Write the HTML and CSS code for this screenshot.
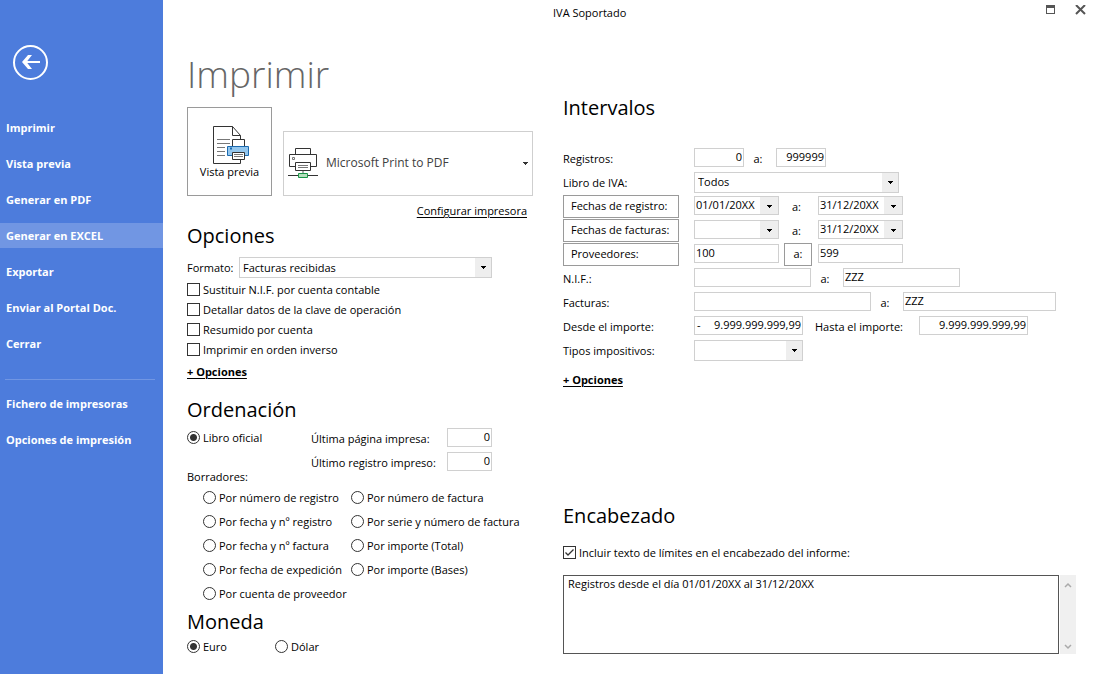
FILE: index.html
```html
<!DOCTYPE html>
<html lang="es">
<head>
<meta charset="utf-8">
<meta name="viewport" content="width=device-width, initial-scale=1">
<title>IVA Soportado</title>
<link rel="stylesheet" href="styles.css">
</head>
<body>
<div class="app">
  <nav class="sidebar">
    <button class="back" type="button" aria-label="Volver">
      <svg width="35" height="35" viewBox="0 0 35 35" fill="none" stroke="#fff" aria-hidden="true">
        <circle cx="17.5" cy="17.5" r="16.5" stroke-width="2"/>
        <path d="M10 17H27" stroke-width="2"/>
        <path d="M9 17L15 10H19L13.500 17L19 24H15Z" fill="#fff" stroke="none"/>
      </svg>
    </button>
    <a class="nav-item" href="#">Imprimir</a>
    <a class="nav-item" href="#">Vista previa</a>
    <a class="nav-item" href="#">Generar en PDF</a>
    <a class="nav-item active" href="#">Generar en EXCEL</a>
    <a class="nav-item" href="#">Exportar</a>
    <a class="nav-item" href="#">Enviar al Portal Doc.</a>
    <a class="nav-item" href="#">Cerrar</a>
    <hr class="nav-rule">
    <a class="nav-item" href="#">Fichero de impresoras</a>
    <a class="nav-item" href="#">Opciones de impresión</a>
  </nav>

  <div class="main">
    <header class="titlebar">
      <span class="title">IVA Soportado</span>
      <button class="win" type="button" aria-label="Maximizar">
        <svg width="11" height="11" viewBox="0 0 11 11" aria-hidden="true"><path d="M1 0H10V9H1ZM2 3V8H9V3Z" fill="#555" fill-rule="evenodd"/></svg>
      </button>
      <button class="win" type="button" aria-label="Cerrar">
        <svg width="11" height="11" viewBox="0 0 11 11" aria-hidden="true"><path d="M1 0L10 9M10 0L1 9" stroke="#555" stroke-width="2"/></svg>
      </button>
    </header>

    <div class="columns">
      <section class="left">
        <h1>Imprimir</h1>
        <div class="print-row">
          <button class="preview" type="button">
            <svg width="37" height="39" viewBox="0 0 37 39" fill="none" stroke="#333" aria-hidden="true">
              <path d="M.5 .5H19.500L27.500 9.500V13M.5 .5V37.500H27.500V34M19.500 .5V9.500H27.500" fill="#fff"/>
              <path d="M4 13.500H17M4 17.500H17M4 21.500H12M4 25.500H12M4 29.500H12" stroke="#777"/>
              <path d="M19.500 20V13.500H31.500V20" fill="#fff"/>
              <path d="M14.500 20.500H35.500V29.500H14.500Z" fill="#93c6ed" stroke="#1b6ab0"/>
              <path d="M17 22.500H19" stroke="#1b6ab0" stroke-width="2"/>
              <path d="M19.500 26.500H31.500V33.500H19.500Z" fill="#fff"/>
              <path d="M21 28.500H30M21 30.500H30" stroke="#777"/>
            </svg>
            <span>Vista previa</span>
          </button>
          <button class="printer" type="button">
            <svg width="30" height="31" viewBox="0 0 30 31" fill="none" stroke="#333" aria-hidden="true">
              <path d="M7.500 7V.5H22.500V7"/>
              <path d="M7 18.500H1.500V6.500H28.500V18.500H23"/>
              <path d="M7.500 14.500H22.500V22.500H7.500Z" fill="#fff"/>
              <path d="M10 17.500H20M10 19.500H20" stroke="#777"/>
              <path d="M4.500 9.500H6.500V11.500H4.500Z" stroke="#777"/>
              <path d="M15 23V26" stroke="#aaa" stroke-width="2"/>
              <path d="M0 27.500H30"/>
              <path d="M10.500 25.500H19.500V29.500H10.500Z" fill="#b5dfbd" stroke="#1a9447"/>
            </svg>
            <span class="printer-name">Microsoft Print to PDF</span>
            <svg width="5" height="3" viewBox="0 0 5 3" aria-hidden="true"><path d="M0 0H5V1H4V2H3V3H2V2H1V1H0Z" fill="#333"/></svg>
          </button>
        </div>
        <a class="config" href="#">Configurar impresora</a>

        <h2>Opciones</h2>
        <div class="format">
          <label for="fmt">Formato:</label>
          <select id="fmt" class="combo"><option>Facturas recibidas</option></select>
        </div>
        <div class="checks">
          <label class="opt"><input type="checkbox">Sustituir N.I.F. por cuenta contable</label>
          <label class="opt"><input type="checkbox">Detallar datos de la clave de operación</label>
          <label class="opt"><input type="checkbox">Resumido por cuenta</label>
          <label class="opt"><input type="checkbox">Imprimir en orden inverso</label>
        </div>
        <a class="more" href="#">+ Opciones</a>

        <h2 class="h-orden">Ordenación</h2>
        <div class="official">
          <div class="official-left">
            <label class="opt tall"><input type="radio" name="orden" checked>Libro oficial</label>
            <span class="drafts-label">Borradores:</span>
          </div>
          <div class="official-right">
            <div class="row counter"><label for="pag">Última página impresa:</label><input id="pag" class="field num" type="text" value="0"></div>
            <div class="row counter"><label for="reg">Último registro impreso:</label><input id="reg" class="field num" type="text" value="0"></div>
          </div>
        </div>
        <div class="drafts">
          <label class="opt tall"><input type="radio" name="orden">Por número de registro</label>
          <label class="opt tall"><input type="radio" name="orden">Por número de factura</label>
          <label class="opt tall"><input type="radio" name="orden">Por fecha y nº registro</label>
          <label class="opt tall"><input type="radio" name="orden">Por serie y número de factura</label>
          <label class="opt tall"><input type="radio" name="orden">Por fecha y nº factura</label>
          <label class="opt tall"><input type="radio" name="orden">Por importe (Total)</label>
          <label class="opt tall"><input type="radio" name="orden">Por fecha de expedición</label>
          <label class="opt tall"><input type="radio" name="orden">Por importe (Bases)</label>
          <label class="opt tall"><input type="radio" name="orden">Por cuenta de proveedor</label>
        </div>

        <h2>Moneda</h2>
        <div class="currency">
          <label class="opt"><input type="radio" name="moneda" checked>Euro</label>
          <label class="opt"><input type="radio" name="moneda">Dólar</label>
        </div>
      </section>

      <section class="right">
        <h2>Intervalos</h2>
        <div class="ranges">
          <div class="row">
            <label class="name" for="r1">Registros:</label>
            <input id="r1" class="field num w-num" type="text" value="0">
            <label class="sep" for="r2">a:</label>
            <input id="r2" class="field num w-num" type="text" value="999999">
          </div>
          <div class="row">
            <label class="name" for="libro">Libro de IVA:</label>
            <select id="libro" class="combo w-book"><option>Todos</option></select>
          </div>
          <div class="row">
            <span class="cell"><button class="box" type="button">Fechas de registro:</button></span>
            <select class="combo date" aria-label="Fecha de registro desde"><option>01/01/20XX</option></select>
            <label class="sep wide" for="fr2">a:</label>
            <select id="fr2" class="combo date"><option>31/12/20XX</option></select>
          </div>
          <div class="row">
            <span class="cell"><button class="box" type="button">Fechas de facturas:</button></span>
            <select class="combo date" aria-label="Fecha de factura desde"><option></option></select>
            <label class="sep wide" for="ff2">a:</label>
            <select id="ff2" class="combo date"><option>31/12/20XX</option></select>
          </div>
          <div class="row">
            <span class="cell"><button class="box" type="button">Proveedores:</button></span>
            <input class="field w-code" type="text" value="100" aria-label="Proveedor desde">
            <span class="mini-cell"><button class="box mini" type="button">a:</button></span>
            <input class="field w-code" type="text" value="599" aria-label="Proveedor hasta">
          </div>
          <div class="row">
            <label class="name" for="n1">N.I.F.:</label>
            <input id="n1" class="field w-nif" type="text">
            <label class="sep" for="n2">a:</label>
            <input id="n2" class="field w-nif" type="text" value="ZZZ">
          </div>
          <div class="row">
            <label class="name" for="f1">Facturas:</label>
            <input id="f1" class="field w-inv" type="text">
            <label class="sep" for="f2">a:</label>
            <input id="f2" class="field w-inv-to" type="text" value="ZZZ">
          </div>
          <div class="row">
            <label class="name" for="i1">Desde el importe:</label>
            <span class="field signed w-amount"><span>-</span><input id="i1" class="num" type="text" value="9.999.999.999,99"></span>
            <label class="until" for="i2">Hasta el importe:</label>
            <input id="i2" class="field num w-amount" type="text" value="9.999.999.999,99">
          </div>
          <div class="row">
            <label class="name" for="tipos">Tipos impositivos:</label>
            <select id="tipos" class="combo w-amount"><option></option></select>
          </div>
        </div>
        <a class="more" href="#">+ Opciones</a>

        <div class="heading">
          <h2>Encabezado</h2>
          <label class="opt"><input type="checkbox" checked>Incluir texto de límites en el encabezado del informe:</label>
          <div class="memo">
            <textarea aria-label="Encabezado">Registros desde el día 01/01/20XX al 31/12/20XX</textarea>
            <div class="scroll">
              <button type="button" aria-label="Subir"><svg width="8" height="6" viewBox="0 0 8 6" aria-hidden="true"><path d="M1 5L4 2L7 5" fill="none" stroke="#aaa" stroke-width="1.500"/></svg></button>
              <button type="button" aria-label="Bajar"><svg width="8" height="6" viewBox="0 0 8 6" aria-hidden="true"><path d="M1 1L4 4L7 1" fill="none" stroke="#aaa" stroke-width="1.500"/></svg></button>
            </div>
          </div>
        </div>
      </section>
    </div>
  </div>
</div>
</body>
</html>
```
FILE: styles.css
```css
* { box-sizing: border-box; }
body {
  margin: 0;
  background: #fff;
  color: #000;
  font: 11px/16px "Open Sans", "Noto Sans", sans-serif;
}
button, input, select, textarea { font: inherit; color: inherit; margin: 0; }
button { padding: 0; background: none; border: 0; }
a { color: inherit; }
h1, h2 { margin: 0; font-weight: 400; }
h1 { font-size: 37px; line-height: 48px; font-weight: 300; color: #666; padding-top: 24px; }
h2 { font-size: 20px; line-height: 30px; }

.app { display: grid; grid-template-columns: 163px 1fr; min-height: 100vh; }

.sidebar {
  display: flex;
  flex-direction: column;
  gap: 11px;
  padding-top: 45px;
  background: #4d7cdc;
  color: #fff;
}
.back { width: 35px; height: 35px; margin: 0 0 24px 13px; }
.back svg { display: block; }
.nav-item { padding-left: 6px; line-height: 25px; font-weight: 700; text-decoration: none; }
.nav-item.active { background: #7196e3; }
.nav-rule { height: 1px; width: 150px; margin: 12px 0 0 5px; border: 0; background: #7196e3; }

.titlebar { display: flex; height: 26px; padding-right: 8px; }
.title { flex: 1; padding-left: 390px; line-height: 26px; }
.win { width: 12px; height: 20px; margin-left: 18px; }
.win svg { display: block; }

.columns {
  display: grid;
  grid-template-columns: 346px 1fr;
  gap: 30px;
  padding: 0 19px 17px 24px;
}
.left { display: flex; flex-direction: column; }
.print-row { display: flex; align-items: flex-end; gap: 11px; padding-top: 9px; }
.preview {
  display: flex;
  flex-direction: column;
  align-items: center;
  width: 85px;
  height: 89px;
  padding-top: 18px;
  border: 1px solid #9a9a9a;
}
.preview svg { margin-left: 3px; }
.preview span { margin-top: -1px; }
.printer {
  display: flex;
  flex: 1;
  align-items: center;
  gap: 8px;
  height: 65px;
  padding: 0 4px 1px;
  border: 1px solid #cfcfcf;
  color: #404040;
}
.printer-name { flex: 1; text-align: left; font-size: 12px; }
.config { align-self: flex-end; margin: 7px 6px 2px 0; text-underline-offset: 2px; }
.format { display: flex; align-items: center; padding: 6px 0 2px; }
.format label { width: 52px; }
.format select { width: 253px; }

.opt { display: flex; align-items: center; gap: 3px; min-height: 20px; white-space: nowrap; }
.opt.tall { min-height: 24px; }
.opt input {
  appearance: none;
  flex: none;
  width: 13px;
  height: 13px;
  margin-bottom: 1px;
  border: 1px solid #333;
  background: #fff;
}
.opt input[type="radio"] { border-radius: 50%; }
.opt input[type="radio"]:checked { background: radial-gradient(circle, #333 0 3px, #fff 4px); }
.opt input[type="checkbox"]:checked {
  background: url("data:image/svg+xml,%3Csvg xmlns='http://www.w3.org/2000/svg' width='11' height='11'%3E%3Cpath d='M1.500 5.500L4 8L9.500 2.500' fill='none' stroke='%23333' stroke-width='1.300'/%3E%3C/svg%3E") center no-repeat;
}
.more { align-self: flex-start; margin-top: 2px; line-height: 20px; font-weight: 700; text-underline-offset: 2px; }
.h-orden { margin-top: 13px; }

.official { display: flex; padding-top: 1px; }
.official-left { display: flex; flex-direction: column; justify-content: space-between; width: 124px; height: 59px; }
.counter label { width: 136px; }
.counter input { width: 45px; }
.drafts { display: grid; grid-template-columns: 148px 1fr; padding: 1px 0 1px 16px; }
.currency { display: grid; grid-template-columns: 88px 1fr; }

.field {
  height: 19px;
  padding: 0 1px 2px;
  border: 1px solid #d0d0d0;
  border-radius: 0;
  background: #fff;
  outline: 0;
}
.num { text-align: right; }
.signed { display: flex; padding-left: 2px; }
.signed input { flex: 1; min-width: 0; padding: 0; border: 0; }
.combo {
  appearance: none;
  height: 21px;
  padding: 0 18px 0 3px;
  border: 1px solid #d0d0d0;
  border-radius: 0;
  background: #fff url("data:image/svg+xml,%3Csvg xmlns='http://www.w3.org/2000/svg' width='16' height='19'%3E%3Cpath d='M0 0H16V19H0Z' fill='%23eee'/%3E%3Cpath d='M6 8H11V9H10V10H9V11H8V10H7V9H6Z'/%3E%3C/svg%3E") right center no-repeat;
}
.combo.date {
  width: 85px;
  height: 19px;
  padding: 0 18px 2px 1px;
  background-image: url("data:image/svg+xml,%3Csvg xmlns='http://www.w3.org/2000/svg' width='18' height='19'%3E%3Cpath d='M0 0H18V19H0Z' fill='%23eee'/%3E%3Cpath d='M7 9H12V10H11V11H10V12H9V11H8V10H7Z'/%3E%3C/svg%3E");
}

.right { display: flex; flex-direction: column; padding-top: 67px; }
.ranges { padding: 23px 0 6px; }
.row { display: flex; align-items: center; height: 24px; }
.row label { padding-top: 2px; }
.row .field, .row .date { margin-bottom: 1px; }
.name, .cell { width: 131px; }
.box { width: 116px; height: 23px; padding-left: 7px; border: 1px solid #9a9a9a; text-align: left; }
.box.mini { width: 28px; padding: 0; text-align: center; }
.sep { width: 32px; padding-right: 4px; text-align: center; }
.sep.wide, .mini-cell { width: 39px; }
.mini-cell { padding-left: 5px; }
.until { width: 116px; padding-left: 12px; }
.w-num { width: 50px; }
.w-book { width: 205px; }
.w-code { width: 85px; }
.w-nif { width: 117px; }
.w-inv { width: 177px; }
.w-inv-to { width: 153px; }
.w-amount { width: 109px; }

.heading { margin-top: auto; padding-bottom: 3px; }
.heading .opt { margin: 12px 0; }
.memo { display: flex; gap: 1px; }
.memo textarea {
  flex: 1;
  height: 79px;
  padding: 0 4px;
  border: 1px solid #555;
  border-radius: 0;
  resize: none;
  outline: 0;
}
.scroll { display: flex; flex-direction: column; justify-content: space-between; width: 16px; background: #f0f0f0; }
.scroll button { height: 17px; }
```
